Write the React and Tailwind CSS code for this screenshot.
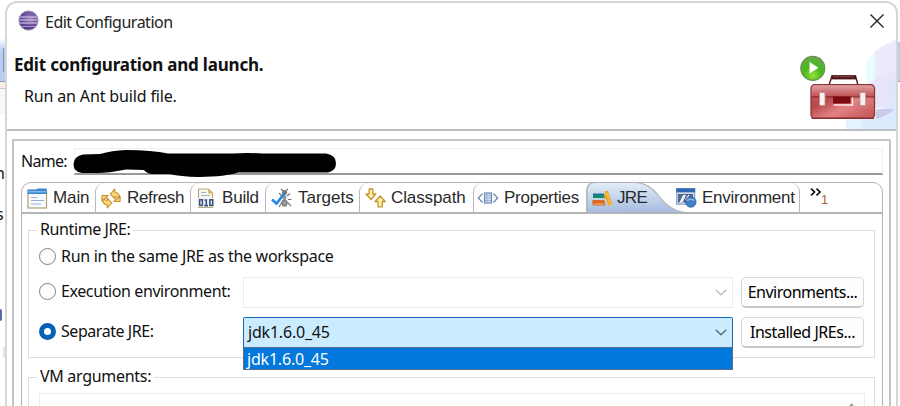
import React from "react";

const ui = "font-['Noto_Sans','Noto_Sans_CJK_KR',sans-serif] whitespace-nowrap";

function EclipseLogo() {
  return (
    <svg width="21" height="21" viewBox="0 0 21 21" className="mb-[3px] shrink-0">
      <defs>
        <radialGradient id="ecl" cx="0.6" cy="0.4" r="0.7">
          <stop offset="0" stopColor="#9a82c2" />
          <stop offset="0.6" stopColor="#64489a" />
          <stop offset="1" stopColor="#3b2862" />
        </radialGradient>
      </defs>
      <circle cx="10.5" cy="10.5" r="9.8" fill="url(#ecl)" />
      <path d="M1.6 7h17.8M.8 10h19.4M.8 13h19.4" stroke="#ddd2ee" strokeWidth="1.1" />
      <path d="M3 16.500h15" stroke="#a892c8" strokeWidth="1" />
      <circle cx="10.5" cy="10.5" r="9.5" fill="none" stroke="#a394bd" strokeWidth="1" />
    </svg>
  );
}

function Toolbox() {
  return (
    <svg width="100" height="89" viewBox="0 0 100 89">
      <defs>
        <linearGradient id="box" x1="0" y1="0" x2="1" y2="1">
          <stop offset="0" stopColor="#cf6a6c" />
          <stop offset="0.35" stopColor="#b9474c" />
          <stop offset="0.6" stopColor="#e08284" />
          <stop offset="1" stopColor="#c25054" />
        </linearGradient>
        <linearGradient id="lid" x1="0" y1="0" x2="0" y2="1">
          <stop offset="0" stopColor="#e0a0a0" />
          <stop offset="1" stopColor="#c0565a" />
        </linearGradient>
        <radialGradient id="play" cx="0.5" cy="0.8" r="0.75">
          <stop offset="0" stopColor="#93e43a" />
          <stop offset="0.5" stopColor="#49b81e" />
          <stop offset="1" stopColor="#5fae44" />
        </radialGradient>
      </defs>
      <path d="M70 22L79 11V46H70Z" fill="#e8fbff" />
      <path d="M79 11Q89 4 100 0V46H79Z" fill="#ecebfc" />
      <path d="M70 46Q84 34 100 31V68H70Z" fill="#e8e4fa" />
      <path d="M92 40H100V89H92Z" fill="#e2e6fc" />
      <path d="M50 78L100 68V89H50Z" fill="#e4f3ff" />
      <path d="M66 78L100 62V89H66Z" fill="#dbeafd" />
      <path d="M80 69L99 69Q90 76 80 79Z" fill="#c3bbe0" opacity="0.7" />
      <g transform="translate(3.500 0)">
        <path d="M29.500 45L32.500 36H56L58.500 45" fill="none" stroke="#5a2226" strokeWidth="1.500" />
        <path d="M32 37.400H56.500" stroke="#4b1218" strokeWidth="4" />
        <path d="M34 36.800H55" stroke="#a8686c" strokeWidth="1" strokeDasharray="2 1" />
        <rect x="11.500" y="44.600" width="63.500" height="33.800" rx="4" fill="url(#box)" stroke="#8a3638" strokeWidth="1.300" />
        <path d="M12.200 56V49Q12.200 45.300 16 45.300H70Q74.400 45.300 74.400 49V56Z" fill="url(#lid)" />
        <path d="M12 56.800H74.500" stroke="#872b30" strokeWidth="1.200" />
        <path d="M12 78.300H74.500" stroke="#8d3034" strokeWidth="1.500" />
        <rect x="20" y="52.500" width="5.500" height="13" rx="1" fill="#f4f1f0" stroke="#b8918e" strokeWidth="0.800" />
        <rect x="60.500" y="52.500" width="5.500" height="13" rx="1" fill="#f4f1f0" stroke="#b8918e" strokeWidth="0.800" />
        <rect x="33.500" y="56.500" width="17.500" height="7" fill="#7c0a0e" />
        <path d="M34 65H53V57.500" fill="none" stroke="#fbe9e8" strokeWidth="1.400" />
        <circle cx="13.300" cy="28.300" r="12" fill="url(#play)" stroke="#708e58" strokeWidth="1.200" />
        <path d="M10 22V33.500L19 27.700Z" fill="#fff" />
      </g>
    </svg>
  );
}

const icons = {
  main: (
    <svg width="21" height="21" viewBox="0 0 21 21">
      <rect x="1" y="2.500" width="18.500" height="17.500" fill="#f4faff" stroke="#b3a06c" strokeWidth="1.200" />
      <path d="M.5 6V1.500H9L10.500 .5H19.500L20 6Z" fill="#3c86cc" />
      <path d="M1 3.800H19.500" stroke="#9dcbee" strokeWidth="1" />
      <path d="M4 9.500H10M4 12.500H17M4 16H14" stroke="#9bb2cf" strokeWidth="1.200" />
    </svg>
  ),
  refresh: (
    <svg width="20" height="21" viewBox="0 0 20 21" fill="#fbd977" stroke="#c38a2c" strokeWidth="1.100" strokeLinejoin="round">
      <path d="M9.200 6L13.800 1V4Q19 5 18.800 11Q16.500 8.500 13.800 8.500V11Z" />
      <path d="M19 8V13.500H13L15 11.300Z" />
      <path d="M10.800 15L6.200 20V17Q1 16 1.200 10Q3.500 12.500 6.200 12.500V10Z" />
      <path d="M1 13V7.500H7L5 9.700Z" />
    </svg>
  ),
  build: (
    <svg width="18" height="21" viewBox="0 0 18 21">
      <path d="M1.500 1H11.500L15.500 5V19.500H1.500Z" fill="#f8f6ea" stroke="#b9ad80" strokeWidth="1.200" />
      <path d="M11 1V5.500H15.500Z" fill="#dcb866" />
      <path d="M4 4.500H9M4 7.500H13" stroke="#9db2cd" strokeWidth="1.200" />
      <path d="M1 10H17V19H1Z" fill="#f4f5f4" />
      <g fill="none" stroke="#3b5384" strokeWidth="1.600">
        <rect x="2.600" y="11.800" width="2.800" height="5.600" />
        <path d="M7.500 12H9.300V18M7.300 17.600H11" />
        <rect x="12.900" y="11.800" width="2.800" height="5.600" />
      </g>
    </svg>
  ),
  targets: (
    <svg width="21" height="20" viewBox="0 0 21 20">
      <g stroke="#777" strokeWidth="1.200" fill="none">
        <path d="M12.500 3L10 1M14.500 3L17 1M11 8L8 5M16 8L19 5.500M17 11.500H20.500M11 14L8 19M16 14L20 18" />
      </g>
      <circle cx="13.500" cy="4.500" r="2.500" fill="#777" />
      <ellipse cx="13.500" cy="9.500" rx="2" ry="2.500" fill="#999" />
      <ellipse cx="13.500" cy="15" rx="3.100" ry="3.800" fill="#858585" />
      <path d="M12 14L15 16M12.500 17L15 13" stroke="#bbb" strokeWidth="0.700" />
      <path d="M1 11.500L5.500 15.500L13 6" fill="none" stroke="#218ce6" strokeWidth="2.700" />
    </svg>
  ),
  classpath: (
    <svg width="21" height="20" viewBox="0 0 21 20" fill="#fdf0a8" stroke="#c8952c" strokeWidth="1.300" strokeLinejoin="round">
      <path d="M4.200 1H7.800V6H10.800L6 11.500L1 6H4.200Z" />
      <path d="M13 18.800H17.300V13.500H20.200L15.200 8L10 13.500H13Z" />
    </svg>
  ),
  properties: (
    <svg width="22" height="12" viewBox="0 0 22 12" fill="none" stroke="#6d8db5" strokeWidth="1.300">
      <path d="M5.500 1.500L1.300 6L5.500 10.500M16.500 1.500L20.700 6L16.500 10.500" />
      <rect x="7.500" y="1" width="7" height="10" fill="#d2e0f0" strokeWidth="1.200" />
      <path d="M7.500 3.500H14.500M7.500 6H14.500M7.500 8.500H14.500M10 1V11" strokeWidth="0.500" />
    </svg>
  ),
  jre: (
    <svg width="21" height="17" viewBox="0 0 21 17">
      <path d="M1 4H12L13.500 9H2.500L1 7.500Z" fill="#148a72" />
      <path d="M1 4.300H12" stroke="#1c6e9c" strokeWidth="1.600" />
      <path d="M2 8.500H13" stroke="#e2f1ee" strokeWidth="0.800" />
      <path d="M.5 10H12.500L13.500 15.500H1L.3 13.500Z" fill="#dc6a24" />
      <path d="M1.500 14H12.500" stroke="#f8b97d" strokeWidth="0.900" />
      <path d="M13 1H16L20.300 14.500L16.500 16L13.500 7.500L12 10Z" fill="#f2a51f" />
      <path d="M14.500 3L18.500 14.500" stroke="#ffd36b" strokeWidth="1.200" strokeDasharray="2 1.500" />
    </svg>
  ),
  environment: (
    <svg width="21" height="20" viewBox="0 0 21 20">
      <rect x=".7" y=".7" width="18" height="15.500" fill="#cfdced" stroke="#8ba4c2" strokeWidth="1.200" />
      <rect x=".3" y=".3" width="18.800" height="4" fill="#2f68b2" />
      <path d="M2 6H17V14.500H2Z" fill="#55688c" />
      <path d="M3.500 14.500L7 7H10L6.500 14.500Z" fill="#eef3fa" />
      <path d="M9.500 12L13 7" stroke="#e8eef7" strokeWidth="1.300" />
      <circle cx="14.800" cy="14" r="5.200" fill="#3f7fc4" stroke="#2e609c" strokeWidth="0.800" />
      <path d="M11 12.500Q14.500 10 18.300 12.500" fill="none" stroke="#86b8e4" strokeWidth="1.500" />
    </svg>
  ),
};

function Tab({ icon, label, width, pad, gap, track, first }) {
  return (
    <div className={`relative flex h-[30px] shrink-0 items-center ${width} ${pad} ${first ? "" : "rounded-tl-[9px] border-l-[1.5px] border-[#b8b8b8]"}`}>
      <span className="relative flex shrink-0 items-center">{icons[icon]}</span>
      <span className={`relative font-['Liberation_Sans',Arial,sans-serif] text-[17px] leading-[28px] whitespace-nowrap text-[#2a2a2a] ${gap} ${track}`}>{label}</span>
    </div>
  );
}

function Radio({ checked }) {
  return checked ? (
    <span className="mb-[3px] h-[17px] w-[17px] shrink-0 rounded-full border-[5px] border-[#0560b8] bg-white" />
  ) : (
    <span className="mb-[3px] h-[17px] w-[17px] shrink-0 rounded-full border-[1.5px] border-[#808080] bg-[#fdfdfd]" />
  );
}

function Chevron({ color }) {
  return (
    <svg width="12" height="7" viewBox="0 0 12 7" fill="none" stroke={color} strokeWidth="1.300">
      <path d="M.7 .8L6 5.800L11.300 .8" />
    </svg>
  );
}

function Button({ children, track }) {
  return (
    <button className={`ml-2 flex h-[31px] w-[123px] shrink-0 items-center justify-center rounded-[5px] border border-b-2 border-[#d8d8d8] border-b-[#c8c8c8] bg-[#fdfdfd] text-base leading-none text-black ${ui} ${track}`}>
      {children}
    </button>
  );
}

function Legend({ children, track }) {
  return (
    <legend className={`ml-[8px] h-[22px] px-[3px] text-base leading-[20px] ${track}`}>{children}</legend>
  );
}

export default function App() {
  return (
    <div className={`flex h-[406px] w-[900px] overflow-hidden bg-white text-[#111] ${ui}`}>
      <div className="flex w-[5px] shrink-0 flex-col overflow-hidden bg-white">
        <div className="mt-[38px] flex h-[43px] items-end justify-end bg-linear-to-b from-white via-[#b9cdf0] via-30% to-[#b9cdf0]">
          <div className="mr-px mb-[9px] h-[24px] w-px bg-[#7f8fb4]" />
        </div>
        <div className="h-px bg-[#8d99b0]" />
        <div className="h-[6px] bg-[#fbeaea]" />
        <div className="h-px bg-[#c8c8c8]" />
        <div className="h-[25px] bg-[#f7f7f7]" />
        <div className="mt-[49px] h-[20px] text-[16px] leading-[20px] -indent-[5px]">n</div>
        <div className="mt-[21px] h-[20px] text-[16px] leading-[20px] -indent-[4px]">s</div>
        <div className="mt-[85px] h-[12px] w-[2px] rounded-r-full bg-[#5a6aa8]" />
        <div className="mt-[26px] ml-[3px] h-[11px] bg-[#f0daf4]" />
      </div>

      <div className="mt-px flex h-[420px] w-[893px] shrink-0 flex-col rounded-t-[12px] border-2 border-[#d6d6d6] bg-white">
        <div className="flex h-[128px] shrink-0 justify-between border-b-2 border-[#bebebe]">
          <div className="flex flex-col">
            <div className="flex h-[38px] items-center pl-[11px]">
              <EclipseLogo />
              <span className="ml-[6px] text-base tracking-[-0.5px] text-[#222]">Edit Configuration</span>
            </div>
            <div className="mt-[12px] pl-[7px] text-[17px] leading-6 font-bold tracking-[-0.2px]">Edit configuration and launch.</div>
            <div className="mt-[7px] pl-[17px] text-base leading-6 tracking-[-0.15px]">Run an Ant build file.</div>
          </div>
          <div className="flex w-[100px] flex-col">
            <div className="flex h-[36px] items-center justify-end pr-[12px]">
              <svg width="14" height="14" viewBox="0 0 14 14" stroke="#222" strokeWidth="1.400">
                <path d="M.5 .5L13.500 13.500M13.500 .5L.5 13.500" />
              </svg>
            </div>
            <div className="mt-[2px]">
              <Toolbox />
            </div>
          </div>
        </div>

        <div className="mx-[5px] mt-[8px] h-[280px] rounded-[1px] border-2 border-[#c4c4c4] pt-[7px] pl-[7px]">
          <div className="relative flex h-[27px] w-[862px] items-center">
            <span className="mb-[2px] w-[53px] text-base tracking-[-0.7px]">Name:</span>
            <div className="h-[27px] flex-1 border border-b-2 border-[#f0f0f0] border-b-[#989898]" />
            <svg width="266" height="30" viewBox="0 0 266 30" className="absolute top-px left-[51px]">
              <path d="M11 5.500L28 5Q40 1.500 54 1Q80 1 96 4.500H160Q176 3.500 190 4.500H254Q264 6 264 14Q264 22 256 23.500H166Q154 27.500 127 28Q108 27.500 98 25H80Q74 24 72 21L54 20.500Q36 24 26 24H10Q1.500 23 1.500 15Q2 7 11 5.500Z" fill="#000" />
            </svg>
          </div>

          <div className="mt-[7px] h-[260px] w-[862px] rounded-t-[10px] border-[1.5px] border-[#b4b4b4]">
            <div className="relative flex h-[31px] border-b-2 border-[#b4b4b4]">
              <svg width="102" height="31" viewBox="0 0 102 31" className="absolute top-[-1px] left-[564px]">
                <defs>
                  <linearGradient id="sel" x1="0" y1="0" x2="0" y2="1">
                    <stop offset="0" stopColor="#e4edf8" />
                    <stop offset="1" stopColor="#a4bbdf" />
                  </linearGradient>
                </defs>
                <path d="M1 31V8Q1 1 8 .5H50Q62 1 72 13Q84 29 100 30.500Z" fill="url(#sel)" stroke="#b0b4ba" strokeWidth="1.200" />
              </svg>
              <Tab first icon="main" label="Main" width="w-[73px]" pad="pl-[5px]" gap="ml-[5px]" track="tracking-[-0.1px]" />
              <Tab icon="refresh" label="Refresh" width="w-[95px]" pad="pl-[5px]" gap="ml-[6px]" track="tracking-[-0.35px]" />
              <Tab icon="build" label="Build" width="w-[75px]" pad="pl-[6px]" gap="ml-[7px]" track="tracking-[-0.2px]" />
              <Tab icon="targets" label="Targets" width="w-[94px]" pad="pl-[5px]" gap="ml-[6px]" track="" />
              <Tab icon="classpath" label="Classpath" width="w-[114px]" pad="pl-[5px]" gap="ml-[5px]" track="tracking-[-0.1px]" />
              <Tab icon="properties" label="Properties" width="w-[113px]" pad="pl-[3px]" gap="ml-[5px]" track="tracking-[-0.25px]" />
              <Tab icon="jre" label="JRE" width="w-[84px]" pad="pl-[5px]" gap="ml-[4px]" track="tracking-[-0.7px]" />
              <div className="flex h-[30px] w-[130px] items-center rounded-tr-[9px] border-r-[1.5px] border-[#b8b8b8] pl-[6px]">
                {icons.environment}
                <span className="ml-[5px] font-['Liberation_Sans',Arial,sans-serif] text-[17px] leading-[28px] tracking-[-0.25px] text-[#2a2a2a]">Environment</span>
              </div>
              <div className="flex pl-[10px]">
                <svg width="12" height="8" viewBox="0 0 12 8" fill="none" stroke="#111" strokeWidth="1.700" className="mt-[5px]">
                  <path d="M1 .7L4.500 4L1 7.300M6.500 .7L10 4L6.500 7.300" />
                </svg>
                <span className="mt-[9px] -ml-px font-['Liberation_Sans',sans-serif] text-[13px] leading-[15px] text-[#b0653c]">1</span>
              </div>
            </div>

            <fieldset className="mt-[5px] ml-[6px] h-[139px] w-[847px] border-[1.5px] border-[#dedede]">
              <Legend track="tracking-[-0.4px]">Runtime JRE:</Legend>
              <div className="flex h-[30px] items-center pt-[3px] pl-[10px]">
                <Radio />
                <span className="mb-[3px] ml-[5px] text-base tracking-[-0.3px]">Run in the same JRE as the workspace</span>
              </div>
              <div className="mt-[6px] flex h-[31px] items-center pl-[10px]">
                <Radio />
                <span className="mb-[3px] ml-[5px] w-[182px] text-base tracking-[-0.4px]">Execution environment:</span>
                <div className="flex h-[31px] w-[490px] shrink-0 items-center justify-end border border-[#ececec] pr-[5px]">
                  <Chevron color="#bdbdbd" />
                </div>
                <Button track="tracking-[-0.5px]">Environments...</Button>
              </div>
              <div className="mt-[9px] flex h-[31px] items-center pl-[10px]">
                <Radio checked />
                <span className="mb-[3px] ml-[5px] w-[182px] text-base tracking-[-0.45px]">Separate JRE:</span>
                <div className="relative flex h-[31px] w-[490px] shrink-0 items-center justify-between rounded-[2px] border-[1.5px] border-[#1c66b8] bg-[#cbecff] pr-[5px] pl-[4px]">
                  <span className="mb-px text-base tracking-[-0.2px]">jdk1.6.0_45</span>
                  <Chevron color="#5b6a76" />
                  <div className="absolute top-[29px] -left-px flex h-[23px] w-[490px] items-center border border-[#5d6e82] bg-[#0277dc] pl-[3px] text-base leading-[20px] tracking-[-0.2px] text-white">jdk1.6.0_45</div>
                </div>
                <Button track="tracking-[-0.45px]">Installed JREs...</Button>
              </div>
            </fieldset>

            <fieldset className="mt-[8px] ml-[6px] h-[80px] w-[847px] border-[1.5px] border-[#dedede]">
              <Legend track="tracking-[-0.3px]">VM arguments:</Legend>
              <div className="mt-[5px] ml-[10px] flex h-[60px] w-[826px] justify-end border border-[#ececec] pt-[9px] pr-[8px]">
                <svg width="9" height="6" viewBox="0 0 9 6"><path d="M0 6L4.500 0L9 6Z" fill="#999" /></svg>
              </div>
            </fieldset>
          </div>
        </div>
      </div>
      <div className="flex w-[2px] flex-col">
        <div className="mt-[42px] h-[39px] bg-[#b9cdf0]" />
        <div className="h-px bg-[#8d99b0]" />
      </div>
    </div>
  );
}
